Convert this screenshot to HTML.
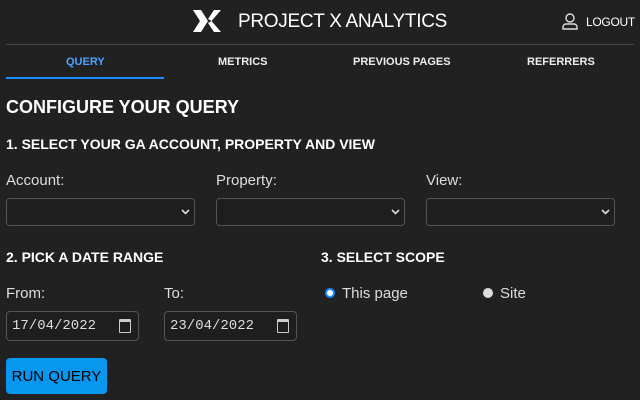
<!DOCTYPE html><html><head><style>
body{margin:0;width:640px;height:400px;background:#212121;color:#eee;font-family:"Liberation Sans",sans-serif;position:relative;overflow:hidden}
.a{position:absolute;white-space:nowrap}
.sel,.inp{position:absolute;border:1px solid #555;border-radius:4px;box-sizing:border-box;background:#1e1e1e}
.b{font-weight:bold}
</style></head><body>
<svg class="a" style="left:193px;top:10px" width="28" height="22" viewBox="0 0 28 22"><path d="M0 0h8l7 11-7 11H0l7-11z" fill="#fff"/><path d="M28 0h-7l-6 9 3.5 2L28 0zM28 22h-7l-6-9 3.5-2z" fill="#fff"/></svg>
<div class="a" style="left:238px;top:11px;font-size:19px;letter-spacing:-0.3px;color:#fff">PROJECT X ANALYTICS</div>
<svg class="a" style="left:562px;top:13px" width="16" height="17" viewBox="0 0 16 17" fill="none" stroke="#ddd" stroke-width="1.4"><circle cx="8" cy="5" r="4"/><path d="M1 16v-2a3 3 0 0 1 3-3h8a3 3 0 0 1 3 3v2z"/></svg>
<div class="a" style="left:586px;top:15px;font-size:12px;letter-spacing:-0.3px;color:#fff">LOGOUT</div>
<div class="a" style="left:6px;top:44px;width:628px;height:1px;background:#444"></div>
<div class="a b" style="left:66px;top:56px;font-size:11px;color:#4da3ff">QUERY</div>
<div class="a" style="left:6px;top:77px;width:158px;height:2px;background:#1a8cff"></div>
<div class="a b" style="left:218px;top:56px;font-size:11px">METRICS</div>
<div class="a b" style="left:353px;top:56px;font-size:11px">PREVIOUS PAGES</div>
<div class="a b" style="left:527px;top:56px;font-size:11px">REFERRERS</div>
<div class="a b" style="left:6px;top:97px;font-size:18px;color:#fff">CONFIGURE YOUR QUERY</div>
<div class="a b" style="left:6px;top:136px;font-size:14px;color:#fff">1. SELECT YOUR GA ACCOUNT, PROPERTY AND VIEW</div>
<div class="a" style="left:6px;top:172px;font-size:15px;color:#ddd">Account:</div>
<div class="a" style="left:216px;top:172px;font-size:15px;color:#ddd">Property:</div>
<div class="a" style="left:426px;top:172px;font-size:15px;color:#ddd">View:</div>
<div class="sel" style="left:6px;top:198px;width:189px;height:28px"></div>
<div class="sel" style="left:216px;top:198px;width:189px;height:28px"></div>
<div class="sel" style="left:426px;top:198px;width:189px;height:28px"></div>
<svg class="a" style="left:181px;top:209px" width="9" height="6" viewBox="0 0 9 6"><path d="M1 1l3.5 3.5L8 1" stroke="#ddd" stroke-width="1.6" fill="none"/></svg>
<svg class="a" style="left:391px;top:209px" width="9" height="6" viewBox="0 0 9 6"><path d="M1 1l3.5 3.5L8 1" stroke="#ddd" stroke-width="1.6" fill="none"/></svg>
<svg class="a" style="left:601px;top:209px" width="9" height="6" viewBox="0 0 9 6"><path d="M1 1l3.5 3.5L8 1" stroke="#ddd" stroke-width="1.6" fill="none"/></svg>
<div class="a b" style="left:6px;top:249px;font-size:14px;color:#fff">2. PICK A DATE RANGE</div>
<div class="a b" style="left:321px;top:249px;font-size:14px;color:#fff">3. SELECT SCOPE</div>
<div class="a" style="left:6px;top:285px;font-size:15px;color:#ddd">From:</div>
<div class="a" style="left:164px;top:285px;font-size:15px;color:#ddd">To:</div>
<div class="inp" style="left:6px;top:311px;width:133px;height:30px"></div>
<div class="inp" style="left:164px;top:311px;width:133px;height:30px"></div>
<div class="a" style="left:12px;top:318px;font-family:'Liberation Mono',monospace;font-size:14px;color:#ddd">17/04/2022</div>
<div class="a" style="left:170px;top:318px;font-family:'Liberation Mono',monospace;font-size:14px;color:#ddd">23/04/2022</div>
<div class="a" style="left:119px;top:319px;width:10px;height:10px;border:1.5px solid #ccc;border-top-width:3px;border-radius:1px"></div>
<div class="a" style="left:277px;top:319px;width:10px;height:10px;border:1.5px solid #ccc;border-top-width:3px;border-radius:1px"></div>
<div class="a" style="left:325px;top:288px;width:6px;height:6px;border:2px solid #1a8cff;border-radius:50%;background:#fff"></div>
<div class="a" style="left:342px;top:285px;font-size:15px;color:#ddd">This page</div>
<div class="a" style="left:483px;top:288px;width:10px;height:10px;border-radius:50%;background:#ddd"></div>
<div class="a" style="left:500px;top:285px;font-size:15px;color:#ddd">Site</div>
<div class="a" style="left:6px;top:358px;width:101px;height:36px;background:#0797ee;border-radius:4px;color:#000;font-size:15px;line-height:38px;text-align:center">RUN QUERY</div>
</body></html>
